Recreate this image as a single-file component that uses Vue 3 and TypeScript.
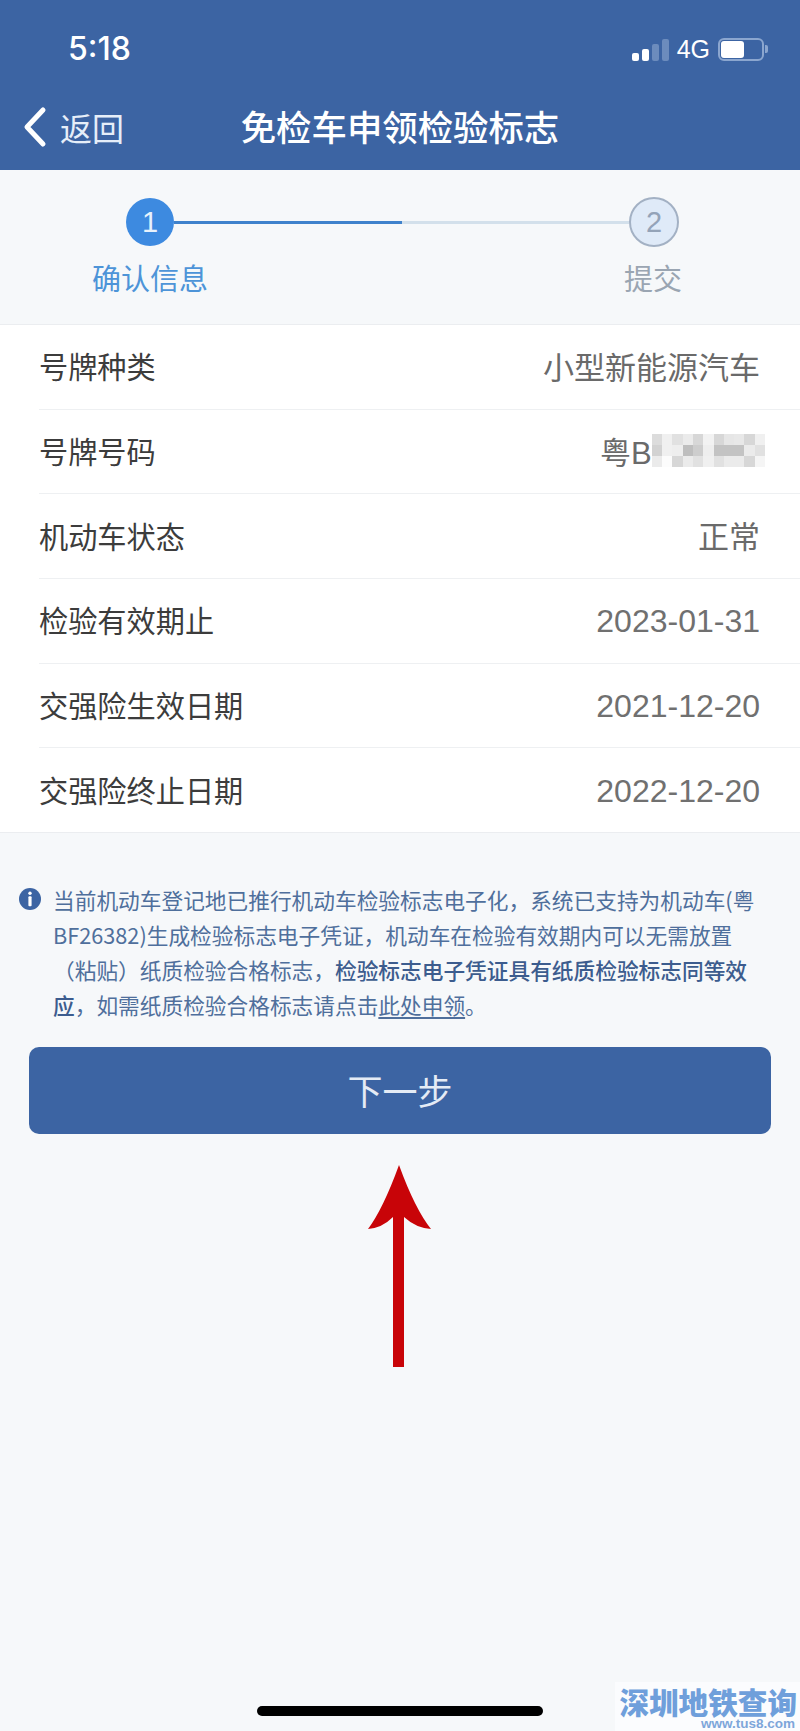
<script setup lang="ts">
const rows: { label: string; value: string; masked?: boolean; num?: boolean }[] = [
  { label: '号牌种类', value: '小型新能源汽车' },
  { label: '号牌号码', value: '粤B', masked: true },
  { label: '机动车状态', value: '正常' },
  { label: '检验有效期止', value: '2023-01-31', num: true },
  { label: '交强险生效日期', value: '2021-12-20', num: true },
  { label: '交强险终止日期', value: '2022-12-20', num: true },
]
const mosaic: number[] = [
  220, 240, 225, 235, 215, 242, 215, 230, 232, 215, 240,
  210, 240, 238, 190, 205, 238, 195, 195, 195, 235, 225,
  235, 252, 215, 235, 225, 240, 225, 235, 235, 215, 245,
]
</script>

<template>
  <div class="page">
    <header class="top">
      <div class="status">
        <span class="time">5:18</span>
        <div class="status-right">
          <div class="signal">
            <i class="b1"></i><i class="b2"></i><i class="b3"></i><i class="b4"></i>
          </div>
          <span class="net">4G</span>
          <div class="battery"><div class="level"></div></div>
          <div class="nub"></div>
        </div>
      </div>
      <div class="nav">
        <div class="back">
          <svg width="26" height="42" viewBox="0 0 26 42">
            <path d="M21 4 L5 21 L21 38" fill="none" stroke="#fff" stroke-width="5" stroke-linecap="round" stroke-linejoin="round" />
          </svg>
          <span>返回</span>
        </div>
        <h1>免检车申领检验标志</h1>
      </div>
    </header>

    <section class="steps">
      <div class="track">
        <div class="dot done">1</div>
        <div class="line"><div class="progress"></div></div>
        <div class="dot next">2</div>
      </div>
      <div class="step-labels">
        <span class="l1">确认信息</span>
        <span class="l2">提交</span>
      </div>
    </section>

    <section class="list">
      <div v-for="r in rows" :key="r.label" class="row">
        <span class="label">{{ r.label }}</span>
        <span class="value" :class="{ num: r.num }">
          {{ r.value }}
          <span v-if="r.masked" class="mosaic">
            <i v-for="(g, i) in mosaic" :key="i" :style="{ background: `rgb(${g},${g},${g})` }"></i>
          </span>
        </span>
      </div>
    </section>

    <section class="notice">
      <svg class="info" width="22" height="22" viewBox="0 0 22 22">
        <circle cx="11" cy="11" r="11" fill="#3c64a3" />
        <circle cx="11" cy="5.2" r="1.7" fill="#fff" />
        <rect x="9.4" y="8.2" width="3.2" height="10" rx="1" fill="#fff" />
      </svg>
      <p>
        当前机动车登记地已推行机动车检验标志电子化，系统已支持为机动车(粤<br />
        BF26382)生成检验标志电子凭证，机动车在检验有效期内可以无需放置<br />
        （粘贴）纸质检验合格标志，<b>检验标志电子凭证具有纸质检验标志同等效<br />
        应</b>，如需纸质检验合格标志请点击<u>此处申领</u>。
      </p>
    </section>

    <button class="next-btn" type="button">下一步</button>

    <div class="arrow-wrap">
      <svg width="64" height="204" viewBox="0 0 64 204">
        <path d="M31 0 Q47 44 63 64 Q48 63 36 52 L36 202 L25 202 L25 52 Q14 63 0 64 Q15 44 31 0 Z" fill="#c80408" />
      </svg>
    </div>

    <div class="spacer"></div>

    <div class="home"></div>

    <div class="watermark">
      <div class="wm-cn">深圳地铁查询</div>
      <div class="wm-en">www.tus8.com</div>
    </div>
  </div>
</template>

<style>
html, body { margin: 0; padding: 0; background: #f6f8fa; }
</style>

<style scoped>
.page {
  position: relative;
  width: 800px;
  height: 1731px;
  overflow: hidden;
  display: flex;
  flex-direction: column;
  background: #f6f8fa;
  font-family: "Noto Sans CJK SC", "Liberation Sans", sans-serif;
}
.top {
  height: 170px;
  background: #3c64a3;
  color: #fff;
  flex: none;
  display: flex;
  flex-direction: column;
}
.status {
  height: 94px;
  display: flex;
  justify-content: space-between;
  align-items: flex-start;
  padding: 32px 32px 0 68px;
  box-sizing: border-box;
}
.time {
  font-family: Inter, "Liberation Sans", sans-serif;
  font-size: 32px;
  font-weight: 500;
  line-height: 34px;
}
.status-right {
  display: flex;
  align-items: center;
  height: 36px;
  margin-top: -1px;
}
.signal {
  display: flex;
  align-items: flex-end;
  gap: 3px;
  height: 22px;
  margin-right: 8px;
  margin-top: 2px;
}
.signal i { display: block; width: 7px; border-radius: 2px; background: #fff; }
.signal .b1 { height: 8px; }
.signal .b2 { height: 12px; }
.signal .b3 { height: 17px; background: #6c8cbd; }
.signal .b4 { height: 22px; background: #6c8cbd; }
.net {
  font-family: "Liberation Sans", sans-serif;
  font-size: 25px;
  line-height: 26px;
  margin-right: 8px;
}
.battery {
  width: 46px;
  height: 23px;
  box-sizing: border-box;
  border: 2px solid #8ba6cf;
  border-radius: 6px;
  padding: 1px;
}
.level { width: 23px; height: 17px; background: #fff; border-radius: 3px; }
.nub { width: 3px; height: 8px; background: #8ba6cf; border-radius: 0 2px 2px 0; margin-left: 1px; }
.nav {
  position: relative;
  height: 76px;
  display: flex;
  align-items: flex-start;
  justify-content: center;
}
.nav h1 {
  margin: 8px 0 0 0;
  font-size: 35.4px;
  font-weight: 500;
  line-height: 48px;
}
.back {
  position: absolute;
  left: 22px;
  top: 12px;
  display: flex;
  align-items: center;
  gap: 12px;
  font-size: 32px;
  line-height: 42px;
  color: #e6eef9;
}
.steps {
  flex: none;
  height: 154px;
}
.track {
  display: flex;
  align-items: center;
  margin: 27px 121px 0 126px;
}
.dot {
  width: 48px;
  height: 48px;
  border-radius: 50%;
  box-sizing: border-box;
  display: flex;
  align-items: center;
  justify-content: center;
  flex: none;
  font-family: "Liberation Sans", sans-serif;
  font-size: 29px;
}
.dot.done { background: #3d8ae0; color: #e8f2fc; }
.dot.next { background: #dfeaf8; border: 2px solid #a3b1c4; color: #94a3b8; width: 50px; height: 50px; }
.line { flex: 1; height: 3px; background: #d3e0eb; }
.progress { width: 228px; height: 3px; background: #3f82cc; }
.step-labels {
  display: flex;
  justify-content: space-between;
  margin: 13px 118px 0 92px;
  font-size: 29px;
  line-height: 34px;
}
.l1 { color: #4d94d8; }
.l2 { color: #9aa5b2; }
.list {
  flex: none;
  height: 509px;
  background: #fff;
  border-top: 1px solid #ebedf0;
  border-bottom: 1px solid #ebedf0;
  box-sizing: border-box;
  padding-left: 39px;
  display: flex;
  flex-direction: column;
}
.row {
  flex: 1;
  display: flex;
  justify-content: space-between;
  align-items: center;
  padding: 0 40px 3px 0;
  border-bottom: 1px solid #eef0f2;
}
.row:last-child { border-bottom: none; }
.label { font-size: 29.2px; color: #3c3c3c; }
.value {
  font-size: 31px;
  color: #6a6a6a;
  display: flex;
  align-items: center;
  font-family: "Liberation Sans", "Noto Sans CJK SC", sans-serif;
}
.value.num { font-size: 32px; padding-top: 5px; color: #707070; }
.mosaic {
  display: grid;
  grid-template-columns: repeat(11, 10.3px);
  grid-auto-rows: 11px;
  margin-right: -5px;
}
.mosaic i { display: block; }
.notice {
  position: relative;
  flex: none;
  padding: 49px 0 0 53px;
  height: 214px;
  box-sizing: border-box;
}
.info { position: absolute; left: 19px; top: 55px; }
.notice p {
  margin: 0;
  font-size: 21.7px;
  line-height: 35px;
  color: #4f6f9c;
  white-space: nowrap;
}
.notice b { color: #3c5c8e; font-weight: 500; }
.notice u { text-underline-offset: 3px; }
.next-btn {
  flex: none;
  align-self: center;
  width: 742px;
  height: 87px;
  border: none;
  border-radius: 10px;
  background: #3c64a3;
  color: #e4ebf5;
  font-family: inherit;
  font-size: 35px;
  padding: 0 0 2px;
}
.arrow-wrap {
  flex: none;
  margin: 31px 0 0 368px;
  height: 204px;
  line-height: 0;
}
.spacer { flex: 1; }
.home {
  position: absolute;
  left: 257px;
  top: 1706px;
  width: 286px;
  height: 10px;
  background: #000;
  border-radius: 5px;
}
.watermark {
  position: absolute;
  left: 615px;
  top: 1682px;
  width: 185px;
  height: 49px;
  background: #fbfcfe;
  text-align: right;
  box-sizing: border-box;
  padding-right: 3px;
}
.wm-cn {
  font-size: 29.6px;
  font-weight: 900;
  color: #6f9fdb;
  line-height: 30px;
  margin-top: 5px;
  white-space: nowrap;
}
.wm-en {
  font-family: "Liberation Sans", sans-serif;
  font-size: 13.5px;
  font-weight: 700;
  color: #7ea6da;
  line-height: 12px;
  margin-top: 1px;
  padding-right: 2px;
}
</style>
